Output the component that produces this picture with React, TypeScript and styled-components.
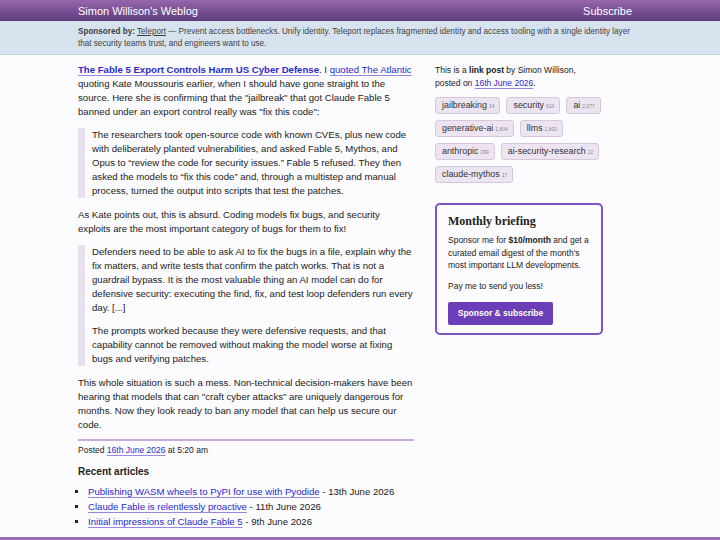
import React, {FunctionComponent} from 'react';
import styled, {createGlobalStyle} from 'styled-components';

const GlobalStyle = createGlobalStyle`
  body {
    margin: 0;
    background: #fcfbfd;
    color: #222;
    font-family: "Liberation Sans", Arial, sans-serif;
  }

  a {
    color: #2a2acc;
    text-decoration: underline;
    text-decoration-color: #9a88dc;
    text-underline-offset: 2px;
  }
`

const Container = styled.div`
  width: 564px;
  margin: 0 auto;
`

const TopBar = styled.header`
  background: linear-gradient(#9766ae, #5c3c7c);
  color: #fff;
`

const TopBarInner = styled(Container)`
  display: flex;
  justify-content: space-between;
  align-items: center;
  height: 21px;
  font-size: 11px;

  span:last-child {
    margin-right: 10px;
  }
`

const SponsorBanner = styled.div`
  background: #d6e3ee;
  border-bottom: 1px solid #c7d5e2;
  color: #3f3f3f;
`

const SponsorInner = styled(Container)`
  font-size: 8.15px;
  line-height: 12px;
  padding: 5px 0 4px;
  box-sizing: border-box;
  height: 33px;

  a {
    color: #3f3f3f;
    text-decoration-color: #3f3f3f;
    text-underline-offset: 1px;
  }
`

const Layout = styled(Container)`
  display: grid;
  grid-template-columns: 336px 170px;
  column-gap: 21px;
  padding-top: 8px;
`

const Article = styled.main`
  font-size: 9.6px;
  line-height: 14px;

  p {
    margin: 0 0 9px;
  }
`

const Quote = styled.blockquote`
  margin: 0 0 10px;
  padding-left: 7px;
  border-left: 7px solid #e8dfef;

  p {
    margin: 0 0 9px;
  }

  p:last-child {
    margin-bottom: 0;
  }
`

const Title = styled.a`
  font-weight: bold;
`

const Rule = styled.hr`
  border: none;
  border-top: 2px solid #c9acdc;
  margin: -2px 0 3px;
`

const PostedLine = styled.div`
  font-size: 8.5px;
  line-height: 12px;
`

const RecentHeading = styled.h3`
  font-size: 10px;
  line-height: 12px;
  margin: 10px 0 6px;
`

const RecentList = styled.ul`
  list-style: square;
  margin: 0;
  padding-left: 10px;
  font-size: 9.6px;
  line-height: 15px;
`

const Sidebar = styled.aside`
  font-size: 8.5px;
  line-height: 12.5px;
  padding-top: 1px;
`

const Meta = styled.p`
  margin: 0 0 8px;
  max-width: 160px;
`

const TagCloud = styled.div`
  display: flex;
  flex-wrap: wrap;
  gap: 6px;
  margin-bottom: 20px;
`

const Tag = styled.span`
  display: inline-flex;
  align-items: baseline;
  gap: 2px;
  height: 17px;
  line-height: 15px;
  box-sizing: border-box;
  padding: 0 5px 0 6px;
  background: #ede4f1;
  border: 1px solid #d5c8dc;
  border-radius: 3px;
  color: #333;
  font-size: 8.9px;
`

const TagCount = styled.span`
  font-size: 5px;
  color: #888;
`

const BriefingBox = styled.div`
  border: 2px solid #7e52c6;
  border-radius: 5px;
  padding: 9px 11px 8px;
  width: 168px;
  box-sizing: border-box;
  line-height: 12.7px;

  p {
    margin: 0 0 8px;
  }
`

const BriefingHeading = styled.h3`
  font-family: "Liberation Serif", "Times New Roman", serif;
  font-size: 12px;
  line-height: 14px;
  margin: 0 0 6px;
`

const SponsorButton = styled.button`
  display: block;
  width: 105px;
  height: 23px;
  border: none;
  border-radius: 2px;
  background: #6c3fb8;
  color: #fff;
  font-family: "Liberation Sans", Arial, sans-serif;
  font-weight: bold;
  font-size: 8.5px;
  padding: 0;
  margin-top: 9px;
`

const Footer = styled.div`
  border-top: 3px solid #9a6cb6;
  margin-top: 8px;
  height: 10px;
`

interface TagInfo {
  name: string;
  count: string;
}

const tags: TagInfo[] = [
  {name: 'jailbreaking', count: '14'},
  {name: 'security', count: '610'},
  {name: 'ai', count: '2,077'},
  {name: 'generative-ai', count: '1,834'},
  {name: 'llms', count: '1,802'},
  {name: 'anthropic', count: '299'},
  {name: 'ai-security-research', count: '22'},
  {name: 'claude-mythos', count: '17'},
]

const recent = [
  {title: 'Publishing WASM wheels to PyPI for use with Pyodide', date: '13th June 2026'},
  {title: 'Claude Fable is relentlessly proactive', date: '11th June 2026'},
  {title: 'Initial impressions of Claude Fable 5', date: '9th June 2026'},
]

const App: FunctionComponent = () => {
  return (
    <>
      <GlobalStyle/>
      <TopBar>
        <TopBarInner>
          <span>Simon Willison's Weblog</span>
          <span>Subscribe</span>
        </TopBarInner>
      </TopBar>
      <SponsorBanner>
        <SponsorInner>
          <strong>Sponsored by:</strong> <a href="#">Teleport</a> — Prevent access bottlenecks. Unify identity.
          Teleport replaces fragmented identity and access tooling with a single identity layer that security
          teams trust, and engineers want to use.
        </SponsorInner>
      </SponsorBanner>
      <Layout>
        <Article>
          <p>
            <Title href="#">The Fable 5 Export Controls Harm US Cyber Defense</Title>. I <a href="#">quoted The Atlantic</a> quoting
            Kate Moussouris earlier, when I should have gone straight to the source. Here she is confirming that
            the "jailbreak" that got Claude Fable 5 banned under an export control really was "fix this code":
          </p>
          <Quote>
            <p>
              The researchers took open-source code with known CVEs, plus new code with deliberately planted
              vulnerabilities, and asked Fable 5, Mythos, and Opus to “review the code for security issues.” Fable 5
              refused. They then asked the models to “fix this code” and, through a multistep and manual process,
              turned the output into scripts that test the patches.
            </p>
          </Quote>
          <p>
            As Kate points out, this is absurd. Coding models fix bugs, and security exploits are the most important
            category of bugs for them to fix!
          </p>
          <Quote>
            <p>
              Defenders need to be able to ask AI to fix the bugs in a file, explain why the fix matters, and write
              tests that confirm the patch works. That is not a guardrail bypass. It is the most valuable thing an AI
              model can do for defensive security: executing the find, fix, and test loop defenders run every
              day. [...]
            </p>
            <p>
              The prompts worked because they were defensive requests, and that capability cannot be removed without
              making the model worse at fixing bugs and verifying patches.
            </p>
          </Quote>
          <p>
            This whole situation is such a mess. Non-technical decision-makers have been hearing that models that can
            "craft cyber attacks" are uniquely dangerous for months. Now they look ready to ban any model that can
            help us secure our code.
          </p>
          <Rule/>
          <PostedLine>Posted <a href="#">16th June 2026</a> at 5:20 am</PostedLine>
          <RecentHeading>Recent articles</RecentHeading>
          <RecentList>
            {recent.map(item => (
              <li key={item.title}><a href="#">{item.title}</a> - {item.date}</li>
            ))}
          </RecentList>
        </Article>
        <Sidebar>
          <Meta>
            This is a <strong>link post</strong> by Simon Willison, posted on <a href="#">16th June 2026</a>.
          </Meta>
          <TagCloud>
            {tags.map(tag => (
              <Tag key={tag.name}>{tag.name} <TagCount>{tag.count}</TagCount></Tag>
            ))}
          </TagCloud>
          <BriefingBox>
            <BriefingHeading>Monthly briefing</BriefingHeading>
            <p>
              Sponsor me for <strong>$10/month</strong> and get a curated email digest of the month's most
              important LLM developments.
            </p>
            <p>Pay me to send you less!</p>
            <SponsorButton>Sponsor &amp; subscribe</SponsorButton>
          </BriefingBox>
        </Sidebar>
      </Layout>
      <Footer/>
    </>
  )
};

export default App;
